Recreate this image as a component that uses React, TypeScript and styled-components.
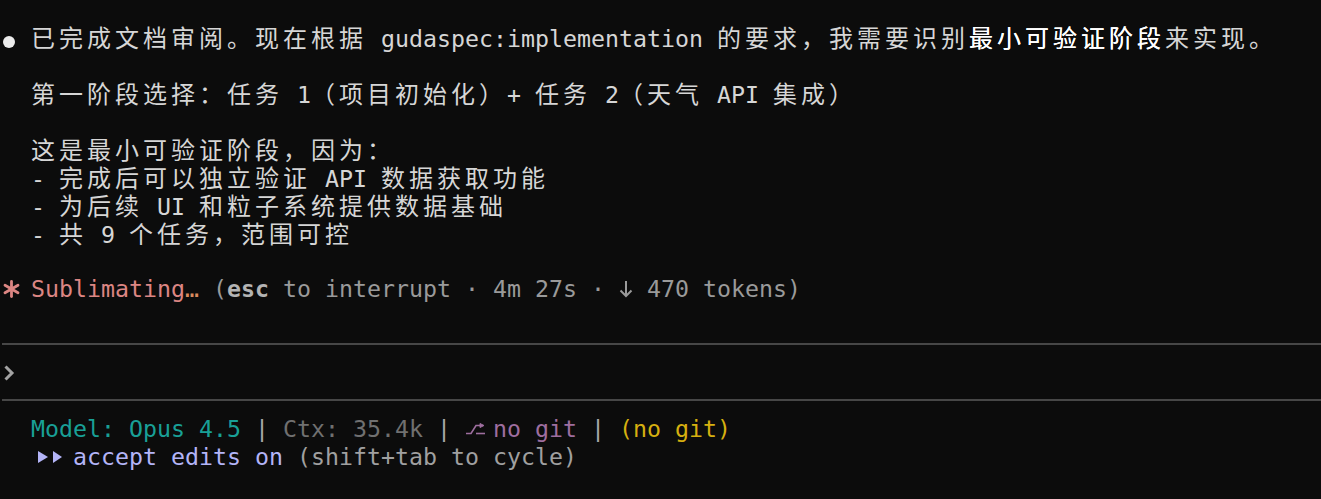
import React from 'react';
import styled, {createGlobalStyle} from 'styled-components';

const GlobalStyle = createGlobalStyle`
  html, body {
    margin: 0;
    padding: 0;
    background: #0c0c0c;
  }
`;

const CELL = 14;

const App = () => {
  return (
    <>
      <GlobalStyle />
      <Screen>
        <Row>
          <Bullet />
          {' '}
          <Wide>已完成文档审阅。现在根据</Wide>
          {' gudaspec:implementation '}
          <Wide>
            的要求，我需要识别<Strong>最小可验证阶段</Strong>来实现。
          </Wide>
        </Row>
        <Row />
        <Row $indent={2}>
          <Wide>第一阶段选择：任务</Wide>
          {' 1'}
          <Wide>（项目初始化）</Wide>
          {'+ '}
          <Wide>任务</Wide>
          {' 2'}
          <Wide>（天气</Wide>
          {' API '}
          <Wide>集成）</Wide>
        </Row>
        <Row />
        <Row $indent={2}>
          <Wide>这是最小可验证阶段，因为：</Wide>
        </Row>
        <Row $indent={2}>
          {'- '}
          <Wide>完成后可以独立验证</Wide>
          {' API '}
          <Wide>数据获取功能</Wide>
        </Row>
        <Row $indent={2}>
          {'- '}
          <Wide>为后续</Wide>
          {' UI '}
          <Wide>和粒子系统提供数据基础</Wide>
        </Row>
        <Row $indent={2}>
          {'- '}
          <Wide>共</Wide>
          {' 9 '}
          <Wide>个任务，范围可控</Wide>
        </Row>
        <Row />
        <Row>
          <Glyph $color="#dc8683">
            <SparkIcon />
          </Glyph>
          {' '}
          <Tone $color="#dc8683">Sublimating</Tone>
          <Tone $color="#d98a5e">…</Tone>
          <Tone $color="#9a9a9a">
            {' ('}
            <Key>esc</Key>
            {' to interrupt · 4m 27s · '}
          </Tone>
          <Glyph $color="#9a9a9a">
            <DownIcon />
          </Glyph>
          <Tone $color="#9a9a9a">{' 470 tokens)'}</Tone>
        </Row>
        <Row />
        <Rule />
        <Row>
          <Glyph $color="#a3a3a3">
            <PromptIcon />
          </Glyph>
        </Row>
        <Rule />
        <Row $indent={2}>
          <Tone $color="#19a097">Model: Opus 4.5</Tone>
          <Tone $color="#a8a8a8">{' | '}</Tone>
          <Tone $color="#707070">Ctx: 35.4k</Tone>
          <Tone $color="#a8a8a8">{' | '}</Tone>
          <Glyph $color="#9e6e9f" $cells={2}>
            <BranchIcon />
          </Glyph>
          <Tone $color="#9e6e9f">no git</Tone>
          <Tone $color="#a8a8a8">{' | '}</Tone>
          <Tone $color="#d6b010">(no git)</Tone>
        </Row>
        <Row $indent={2}>
          <Glyph $color="#b3b4f7" $cells={2}>
            <ArrowsIcon />
          </Glyph>
          {' '}
          <Tone $color="#b3b4f7">accept edits on</Tone>
          <Tone $color="#a0a0a0">{' (shift+tab to cycle)'}</Tone>
        </Row>
      </Screen>
    </>
  );
};

const SparkIcon = () => (
  <svg width="17" height="18" viewBox="0 0 17 18" stroke="currentColor" strokeWidth="2.8" strokeLinecap="round">
    <path d="M8.5 1.5 V16.5" />
    <path d="M2 5.2 L15 12.8" />
    <path d="M2 12.8 L15 5.2" />
  </svg>
);

const DownIcon = () => (
  <svg width="14" height="18" viewBox="0 0 14 18" fill="none" stroke="currentColor" strokeWidth="2">
    <path d="M7 1 V16" />
    <path d="M1.5 10.5 L7 16 L12.5 10.5" />
  </svg>
);

const PromptIcon = () => (
  <svg width="12" height="16" viewBox="0 0 12 16" fill="none" stroke="currentColor" strokeWidth="3">
    <path d="M2.5 1.5 L9 8 L2.5 14.5" />
  </svg>
);

const BranchIcon = () => (
  <svg width="22" height="14" viewBox="0 0 22 14" fill="none" stroke="currentColor" strokeWidth="1.6">
    <path d="M1 11.5 H6 L11 3.5 H15" />
    <path d="M15 1.5 L19 3.5 L15 5.5 Z" fill="currentColor" strokeWidth="1" />
    <path d="M11 11.5 H20" />
  </svg>
);

const ArrowsIcon = () => (
  <svg width="32" height="14" viewBox="0 0 32 14" fill="currentColor">
    <path d="M7 1 L17 7 L7 13 Z" />
    <path d="M22 1 L31 7 L22 13 Z" />
  </svg>
);

const Screen = styled.div`
  min-height: 100vh;
  box-sizing: border-box;
  padding: 23px 0 0 3px;
  background: #0c0c0c;
  color: #d6d6d6;
  font-family: 'DejaVu Sans Mono', 'Liberation Mono', monospace;
  font-size: 23.25px;
  overflow: hidden;
`;

const Row = styled.div<{$indent?: number}>`
  height: 28px;
  line-height: 28px;
  white-space: pre;
  padding-left: ${({$indent}) => ($indent || 0) * CELL}px;
`;

const Wide = styled.span`
  font-family: 'Noto Sans CJK SC', sans-serif;
  font-size: 24px;
  letter-spacing: 4px;
  text-spacing-trim: space-all;
  text-autospace: no-autospace;
`;

const Strong = styled.span`
  font-weight: 400;
  color: #ffffff;
  text-shadow: 0 0 0.4px #ffffff;
`;

const Bullet = styled.span`
  display: inline-block;
  width: 12px;
  height: 12px;
  margin-right: 2px;
  border-radius: 50%;
  background: #ececec;
  vertical-align: -1px;
`;

const Tone = styled.span<{$color: string}>`
  color: ${({$color}) => $color};
`;

const Key = styled.span`
  font-weight: 700;
  color: #b4b4b4;
`;

const Glyph = styled.span<{$color: string; $cells?: number}>`
  display: inline-flex;
  align-items: center;
  justify-content: flex-start;
  width: ${({$cells}) => ($cells || 1) * CELL}px;
  height: 28px;
  vertical-align: top;
  color: ${({$color}) => $color};
  overflow: visible;

  svg {
    flex-shrink: 0;
  }
`;

const Rule = styled.div`
  height: 28px;
  margin-left: -1px;
  padding-top: 12px;
  box-sizing: border-box;

  &::after {
    content: '';
    display: block;
    height: 2px;
    background: #474747;
  }
`;

export default App;
